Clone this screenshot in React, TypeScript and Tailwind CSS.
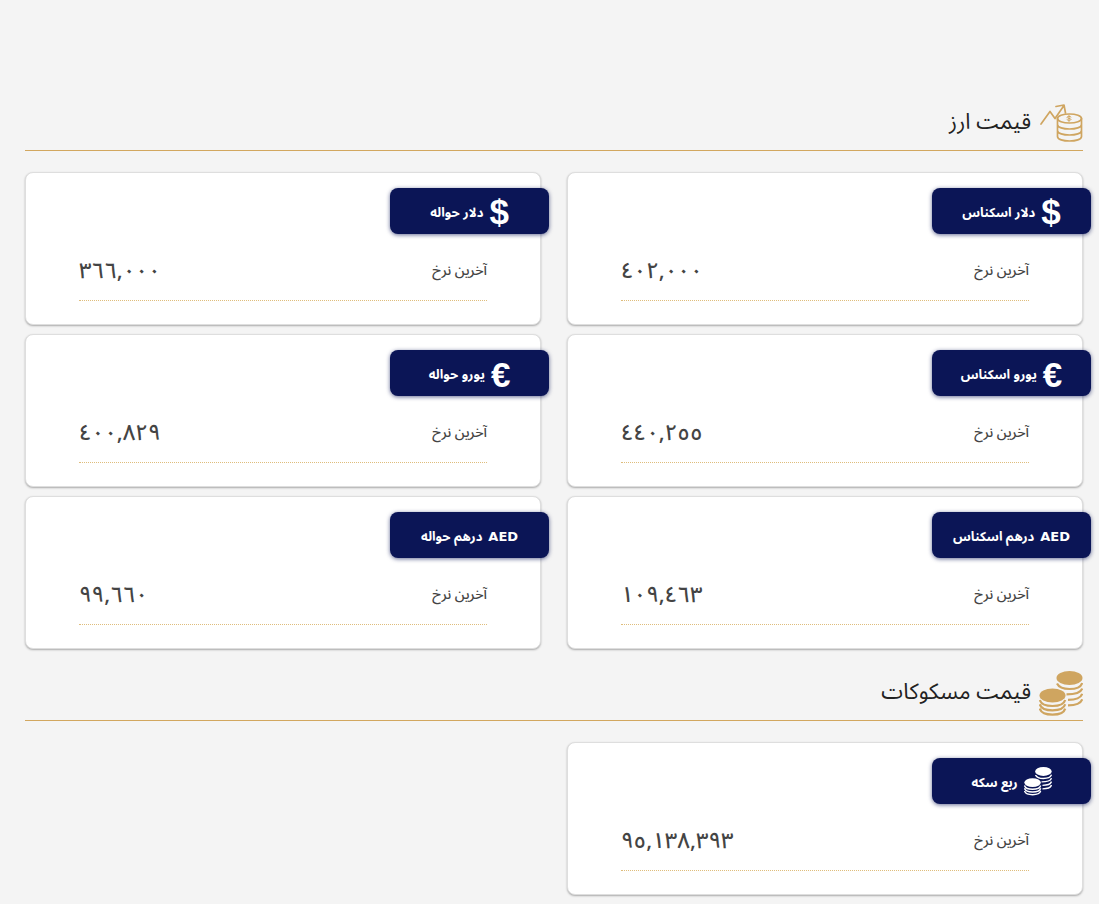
import type { ReactNode } from "react";

type Rate = {
  id: string;
  title: string;
  price: string;
  icon: ReactNode;
};

function CoinsIcon({ className }: { className: string }) {
  return (
    <svg viewBox="0 0 44 46" className={className} fill="currentColor" aria-hidden="true">
      <ellipse cx="30.500" cy="8" rx="13" ry="7" />
      <ellipse cx="13.500" cy="25.500" rx="13" ry="7" />
      <g fill="none" stroke="currentColor" strokeWidth="2.200">
        <path d="M18 13.500c2 4 7 5.500 12.500 5.500s11.500-1.800 12.700-6" />
        <path d="M27.500 24.300c9 0 14.500-1.600 15.700-5.800M29 29.800c8 0 13-1.800 14.200-6M29 35.300c8 0 13-1.800 14.200-6" />
        <path d="M.8 30c1.200 4.300 6.200 6 12.700 6s11.500-1.700 12.700-6M.8 34.300c1.200 4.300 6.200 6 12.700 6s11.500-1.700 12.700-6M.8 38.600c1.200 4.300 6.200 6 12.700 6s11.500-1.700 12.700-6" />
      </g>
    </svg>
  );
}

function GrowthIcon() {
  return (
    <svg
      viewBox="0 0 44 40"
      className="h-10 w-11"
      fill="none"
      stroke="currentColor"
      strokeLinecap="round"
      strokeLinejoin="round"
      aria-hidden="true"
    >
      <g strokeWidth="1.700">
        <path d="M2 21 11 8.500l5 7L25 2.500M17 3.500l8-1.500 1.500 8" />
        <ellipse cx="30.500" cy="15.500" rx="12" ry="4.500" />
        <path d="M18.500 15.500v18c0 6 24 6 24 0v-18M18.500 21.500c0 6 24 6 24 0M18.500 27.500c0 6 24 6 24 0" />
      </g>
      <path d="M32 14c-1-1-4-.8-4 .3 0 1.300 4 .8 4 2.100 0 1.200-3 1.300-4 .3M30 12.500v6" strokeWidth="1" />
    </svg>
  );
}

const dollar = <span className="pt-0.5 font-['Liberation_Sans'] text-[35px] font-bold">$</span>;
const euro = <span className="pt-1 font-['Liberation_Sans'] text-[35px] font-bold">€</span>;
const dirham = <span className="pt-1 font-['DejaVu_Sans'] text-[13px] font-bold">AED</span>;

const currencies: Rate[] = [
  { id: "usd-cash", title: "دلار اسکناس", price: "٤٠٢,٠٠٠", icon: dollar },
  { id: "usd-transfer", title: "دلار حواله", price: "٣٦٦,٠٠٠", icon: dollar },
  { id: "eur-cash", title: "یورو اسکناس", price: "٤٤٠,٢٥٥", icon: euro },
  { id: "eur-transfer", title: "یورو حواله", price: "٤٠٠,٨٢٩", icon: euro },
  { id: "aed-cash", title: "درهم اسکناس", price: "١٠٩,٤٦٣", icon: dirham },
  { id: "aed-transfer", title: "درهم حواله", price: "٩٩,٦٦٠", icon: dirham },
];

const coins: Rate[] = [
  { id: "quarter", title: "ربع سکه", price: "٩٥,١٣٨,٣٩٣", icon: <CoinsIcon className="h-[30px] w-7" /> },
];

function RateCard({ rate }: { rate: Rate }) {
  return (
    <article className="h-[153px] rounded-lg border border-[#dedede] bg-white pt-[15px] shadow-[0_1px_2px_#aaa]">
      <h3 className="-mr-[9px] flex h-[46px] w-[159px] items-center justify-center gap-1.5 rounded-lg bg-[#0b1556] text-[13px] leading-6 font-bold whitespace-nowrap text-white shadow-[0_1px_4px_#0b1556a0]">
        {rate.icon}
        <span className="pt-1">{rate.title}</span>
      </h3>
      <div className="mx-[53px] mt-1.5 flex h-[61px] items-center justify-between border-b border-dotted border-[#dfbd7c] pt-0.5">
        <span className="text-sm font-medium text-[#444]">آخرین نرخ</span>
        <span dir="ltr" className="text-[22px] font-medium text-[#444]">
          {rate.price}
        </span>
      </div>
    </article>
  );
}

function RateSection({ title, icon, rates }: { title: string; icon: ReactNode; rates: Rate[] }) {
  return (
    <section>
      <div className="mb-[21px] flex h-[50px] items-center gap-2 border-b border-[#d2a75f] pb-1.5">
        <span className="text-[#cfa560]">{icon}</span>
        <h2 className="pb-0.5 text-[22px] leading-8 text-[#222]">{title}</h2>
      </div>
      <div className="grid grid-cols-2 gap-x-[26px] gap-y-[9px]">
        {rates.map((rate) => (
          <RateCard key={rate.id} rate={rate} />
        ))}
      </div>
    </section>
  );
}

export default function App() {
  return (
    <main
      dir="rtl"
      lang="fa"
      className="flex min-h-screen flex-col gap-[22px] bg-[#f4f4f4] pt-[101px] pr-4 pb-2 pl-[25px] font-['Noto_Sans_Arabic','DejaVu_Sans',sans-serif]"
    >
      <RateSection title="قیمت ارز" icon={<GrowthIcon />} rates={currencies} />
      <RateSection title="قیمت مسکوکات" icon={<CoinsIcon className="h-[46px] w-11" />} rates={coins} />
    </main>
  );
}
